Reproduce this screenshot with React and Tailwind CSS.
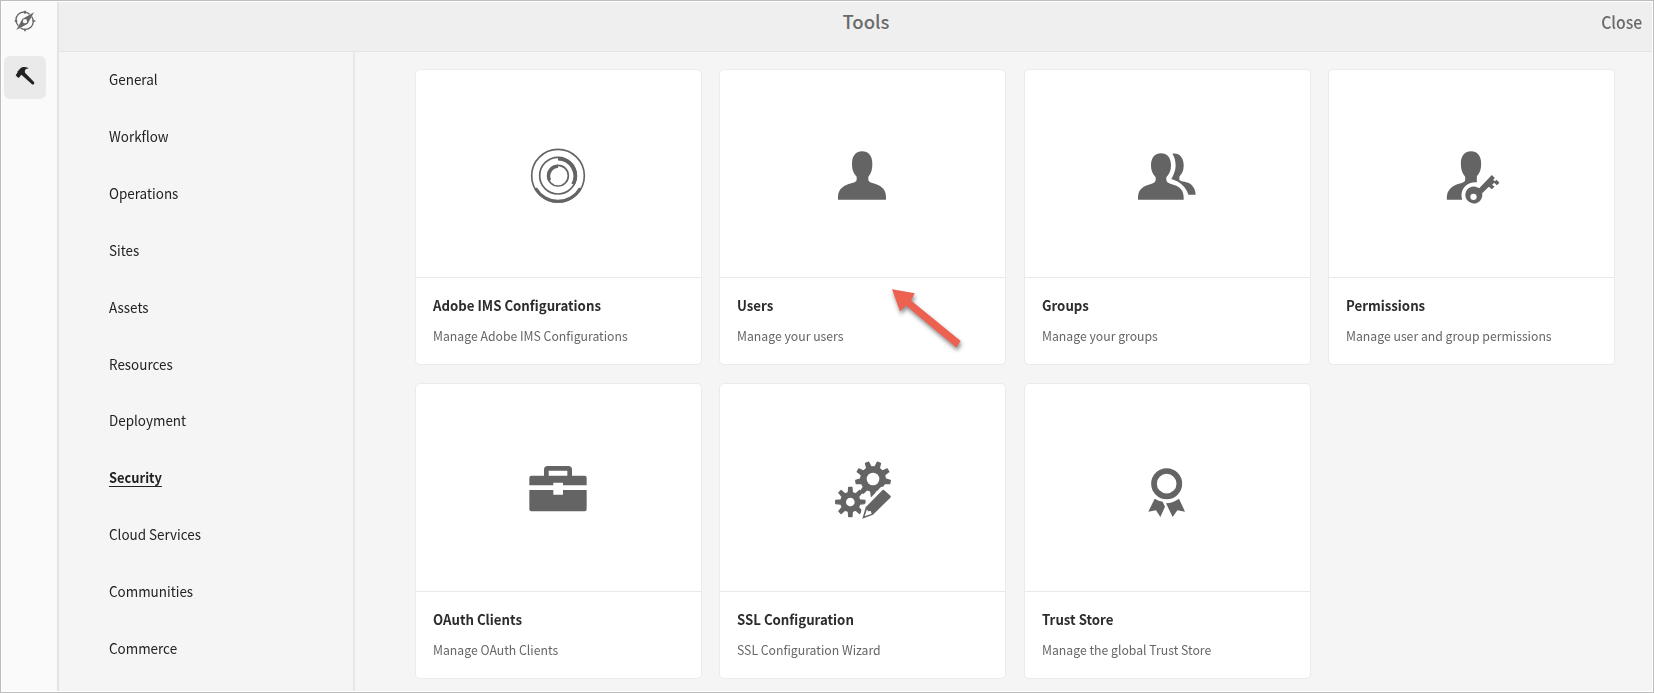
import React from "react";

const SECTIONS = [
  "General",
  "Workflow",
  "Operations",
  "Sites",
  "Assets",
  "Resources",
  "Deployment",
  "Security",
  "Cloud Services",
  "Communities",
  "Commerce",
];

function gearPath(cx, cy, teeth, rootR, tipR, phase) {
  const step = (Math.PI * 2) / teeth;
  const at = (r, a) => `${(cx + r * Math.cos(a)).toFixed(1)},${(cy + r * Math.sin(a)).toFixed(1)}`;
  const pts = [];
  for (let i = 0; i < teeth; i += 1) {
    const a = phase + i * step;
    pts.push(at(rootR, a - step * 0.26), at(tipR, a - step * 0.14), at(tipR, a + step * 0.14), at(rootR, a + step * 0.26));
  }
  return `M${pts.join("L")}Z`;
}

function Glyph({ viewBox, children }) {
  return (
    <svg className="h-[90px] w-[120px] fill-[#646464]" viewBox={viewBox}>
      {children}
    </svg>
  );
}

const ImsIcon = () => (
  <Glyph viewBox="-3 -3 360 270">
    <g className="fill-none stroke-[#646464]">
      <circle cx="174" cy="137" r="79" strokeWidth="5" />
      <circle cx="174" cy="137" r="55" strokeWidth="5" />
      <circle cx="174" cy="137" r="31" strokeWidth="5" />
      <path d="M107 175A77 77 0 0 0 241 175" strokeWidth="9" />
      <path d="M174 86A52 52 0 0 1 219 163" strokeWidth="11" />
      <path d="M174 109A29 29 0 0 0 149 151" strokeWidth="10" />
    </g>
  </Glyph>
);

const UserIcon = () => (
  <Glyph viewBox="-21 -3 360 270">
    <path d="M84 209V201C84 181 96 169 116 162Q140 157 140 150V140C130 129 126 118 126 101C126 77 138 64 156.500 64C175 64 187 77 187 101C187 118 184 129 175 140V150Q175 157 197 162C217 169 228 181 228 201V209Z" />
  </Glyph>
);

const GroupIcon = () => (
  <Glyph viewBox="-9 -3 360 270">
    <path d="M84 209V202C84 181 96 170 116 164Q137 159 137 150V142C127 131 123 121 123 106C123 83 135 70 153 70C171 70 183 83 183 106C183 121 179 131 169 142V150Q169 159 190 164C210 170 221 181 221 202V209Z" />
    <path d="M187 71C207 67 221 82 221 105C221 121 218 129 208 140V150Q211 154 224 155C245 159 256 173 257 194H235C229 173 212 155 184 147Q196 127 197 108Q197 85 187 71Z" />
  </Glyph>
);

const PermissionIcon = () => (
  <Glyph viewBox="-26.500 -3 360 270">
    <path d="M81 209V202C82 181 94 169 114 162Q136 158 136 150V140C127 129 123 118 123 101C123 77 135 64 153.500 64C172 64 184 77 184 101C184 118 180 129 171 139V157C144 155 125 173 125 196Q125 203 127 209Z" />
    <path
      fillRule="evenodd"
      d="M178 175L216 135L225 144L220 149L225 154L230 149L239 158L231 166L223 158L217 164L224 170L216 178L207 170L187 190A25.500 25.500 0 1 1 178 175ZM161 191A9.500 9.500 0 1 0 161 210A9.500 9.500 0 1 0 161 191Z"
    />
  </Glyph>
);

const BriefcaseIcon = () => (
  <Glyph viewBox="-3 -6 360 270">
    <path
      fillRule="evenodd"
      d="M132 92V74Q132 63 143 63H205Q216 63 216 74V92H254Q260 92 260 98V121H189V113H160V121H88V98Q88 92 94 92ZM146 92H202V77H146Z"
    />
    <path d="M88 135H160V149H189V135H260V193Q260 199 254 199H94Q88 199 88 193Z" />
  </Glyph>
);

const SslIcon = () => (
  <Glyph viewBox="-21 -6 360 270">
    <defs>
      <mask id="pencil-gap">
        <rect width="360" height="270" fill="white" />
        <path d="M148 224L156 186L212 127Q222 121 232 128L262 150L190 230Z" fill="black" />
      </mask>
    </defs>
    <g mask="url(#pencil-gap)" className="stroke-[#646464] stroke-[4]" strokeLinejoin="round">
      <path d={gearPath(189, 102, 9, 37, 52, -Math.PI / 2 + Math.PI / 9)} />
      <path d={gearPath(121, 171, 8, 29, 44, 0)} />
    </g>
    <circle cx="189" cy="102" r="19" className="fill-white" />
    <circle cx="121" cy="171" r="13" className="fill-white" />
    <path
      fillRule="evenodd"
      d="M222 135L242 153Q243 156 241 158L189 209L157 221L167 187L217 136Q220 133 222 135ZM171 193L164 214L185 206L182 198L174 199Z"
    />
  </Glyph>
);

const TrustIcon = () => (
  <Glyph viewBox="-9 -6 360 270">
    <circle cx="170" cy="116" r="38" className="fill-none stroke-[#646464] stroke-[17]" />
    <path d="M134 161Q146 168 158 170L165 185L151 216L138 196L115 200Z" />
    <path d="M207 161L225 200L202 196L188 216L168 175Q190 173 207 161Z" />
  </Glyph>
);

const TOOLS = [
  { title: "Adobe IMS Configurations", text: "Manage Adobe IMS Configurations", Icon: ImsIcon },
  { title: "Users", text: "Manage your users", Icon: UserIcon, pointer: true },
  { title: "Groups", text: "Manage your groups", Icon: GroupIcon },
  { title: "Permissions", text: "Manage user and group permissions", Icon: PermissionIcon },
  { title: "OAuth Clients", text: "Manage OAuth Clients", Icon: BriefcaseIcon },
  { title: "SSL Configuration", text: "SSL Configuration Wizard", Icon: SslIcon },
  { title: "Trust Store", text: "Manage the global Trust Store", Icon: TrustIcon },
];

function PointerArrow() {
  return (
    <svg className="absolute top-[213px] left-[166px] h-[76px] w-[86px] overflow-visible drop-shadow-[1px_3px_2px_rgba(0,0,0,0.45)]" viewBox="886 283 86 76">
      <path className="fill-[#ec6150]" d="M892 289.300L914.700 293.300L911 300.500L960.700 341L956.300 347.500L906 305.500L900 311.300Z" />
    </svg>
  );
}

function ToolCard({ title, text, Icon, pointer }) {
  return (
    <article className="relative flex h-[296px] flex-col rounded-[5px] border border-[#ebebeb] bg-white">
      <div className="flex h-[208px] items-center justify-center border-b border-[#e9e9e9]">
        <Icon />
      </div>
      <div className="flex flex-col gap-[11px] px-[17px] pt-[17px]">
        <h2 className="origin-left scale-x-[0.945] text-[14px] leading-5 font-bold whitespace-nowrap text-[#2c2c2c]">{title}</h2>
        <p className="origin-left scale-x-[0.942] text-[13px] leading-5 whitespace-nowrap text-[#666]">{text}</p>
      </div>
      {pointer && <PointerArrow />}
    </article>
  );
}

function CompassIcon() {
  return (
    <svg className="h-[22px] w-[22px]" viewBox="42 28 66 66">
      <g className="fill-none stroke-[#666] stroke-[4]">
        <path d="M89 41A24 24 0 0 0 55 75" />
        <path d="M95 48A24 24 0 0 1 62 82" />
        <path d="M75 30V39M75 84V92M44 61H52M98 61H106" strokeWidth="5" />
      </g>
      <path
        className="fill-[#666]"
        fillRule="evenodd"
        d="M102 35L83 69L49 88L67 55ZM75 55A6.500 6.500 0 1 0 75 68A6.500 6.500 0 1 0 75 55Z"
      />
    </svg>
  );
}

function HammerIcon() {
  return (
    <svg className="h-5 w-5 fill-[#222]" viewBox="46 199 60 60">
      <path d="M86 205Q78 201 71 202Q65 203 61 207L53 216Q55 219 51 222L48 227L56 235L62 230Q62 226 66 226L97 254Q100 256 103 253Q105 250 103 247L76 219Q74 213 78 209Q82 206 86 207Z" />
    </svg>
  );
}

export default function App() {
  return (
    <div className="h-[693px] w-[1654px] border border-[#bdbdbd] bg-white p-px font-['Noto_Sans_CJK_SC','Noto_Sans',sans-serif]">
      <div className="flex h-full overflow-hidden">
        <aside className="flex w-[57px] shrink-0 flex-col border-r-2 border-[#e3e3e3] bg-[#fafafa]">
          <button className="flex h-[54px] w-[46px] items-start justify-center pt-[7.500px]">
            <CompassIcon />
          </button>
          <button className="ml-[2px] flex h-[43px] w-[42px] items-start justify-center rounded-md bg-[#eaeaea] pt-[10px]">
            <HammerIcon />
          </button>
        </aside>
        <div className="flex min-w-0 flex-1 flex-col bg-[#f5f5f5]">
          <header className="grid h-[50px] shrink-0 grid-cols-[1fr_auto_1fr] border-b border-[#e4e4e4] bg-[#efefef] text-[#6a6a6a]">
            <span />
            <h1 className="ml-[21px] pt-[5px] text-[18.500px] leading-7 font-medium">Tools</h1>
            <button className="flex origin-right scale-x-[0.93] justify-end pt-[6px] pr-[11px] text-[17px] leading-7 font-medium">Close</button>
          </header>
          <div className="flex min-h-0 flex-1">
            <nav className="flex w-[296px] shrink-0 flex-col border-r-2 border-[#e7e7e7] pl-[50px]">
              {SECTIONS.map((name) => (
                <a
                  key={name}
                  className={
                    name === "Security"
                      ? "h-[56.850px] w-fit origin-left scale-x-[0.92] pt-[17.400px] text-[14px] leading-5 font-bold text-[#222] underline underline-offset-[3px]"
                      : "h-[56.850px] w-fit origin-left scale-x-[0.96] pt-[17.400px] text-[14px] leading-5 text-[#222]"
                  }
                >
                  {name}
                </a>
              ))}
            </nav>
            <main className="grid flex-1 auto-rows-[296px] grid-cols-[repeat(4,287px)] gap-x-[17.300px] gap-y-[18px] pt-[17px] pl-[60px]">
              {TOOLS.map((tool) => (
                <ToolCard key={tool.title} {...tool} />
              ))}
            </main>
          </div>
        </div>
      </div>
    </div>
  );
}
